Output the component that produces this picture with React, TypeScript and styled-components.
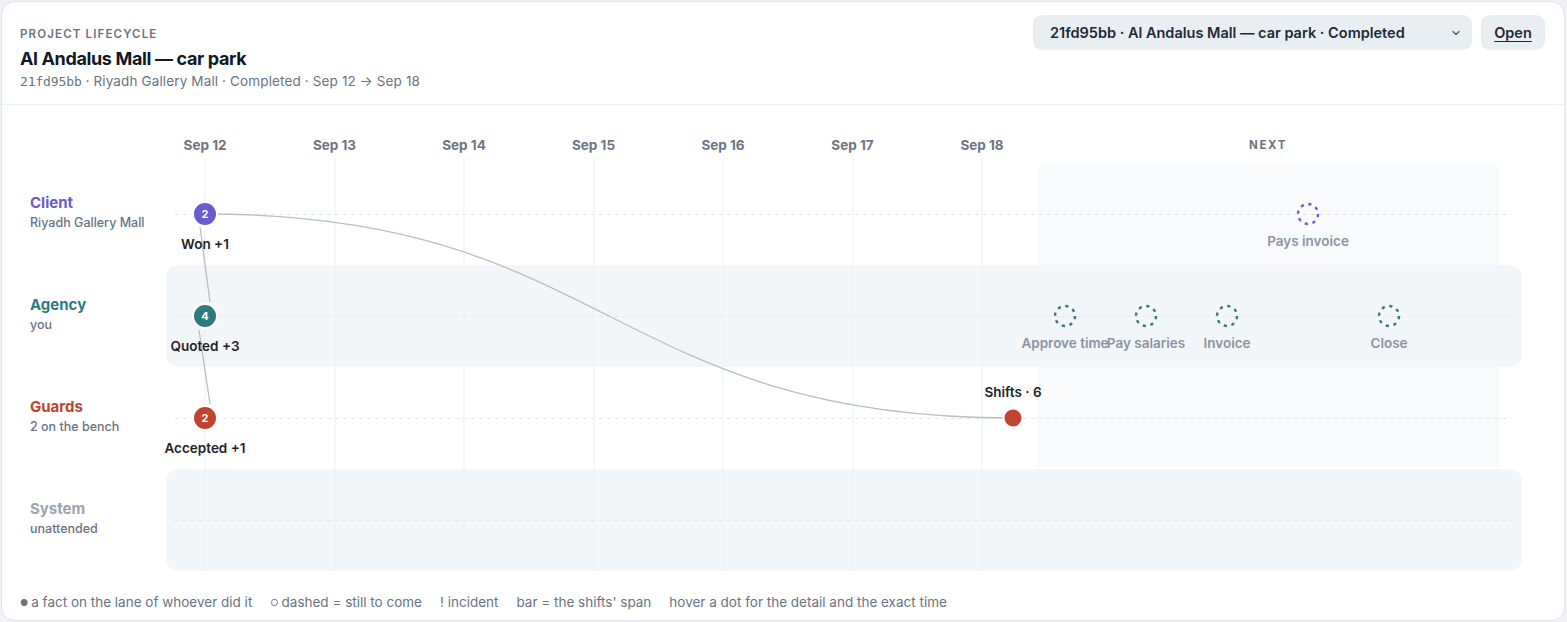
import styled, { createGlobalStyle } from 'styled-components';

const GlobalStyle = createGlobalStyle`
  html, body {
    margin: 0;
    padding: 0;
    background: #eef1f5;
  }
  body {
    font-family: Inter, 'Noto Sans', sans-serif;
    color: #111827;
    -webkit-font-smoothing: antialiased;
  }
`;

// chart scale (px inside the plot column)
const AXIS_H = 58;
const LANE_H = 102;
const DAY0 = 39;
const DAY_W = 129.5;
const NEXT_X = 871;
const NEXT_W = 462;

const dayX = (d: number) => DAY0 + DAY_W * d;
const laneY = (i: number) => AXIS_H + LANE_H * i + LANE_H / 2;
const slotX = (k: number) => NEXT_X + 28 + 81 * k;

const PURPLE = '#6b5bd0';
const TEAL = '#2f7a80';
const RED = '#c0442f';

const Page = styled.div`
	padding: 1px 2px 2px 1px;
`;

const Card = styled.div`
	background: #ffffff;
	border: 1px solid #e2e6eb;
	border-radius: 14px;
	overflow: hidden;
`;

const Header = styled.header`
	display: flex;
	justify-content: space-between;
	align-items: flex-start;
	height: 103px;
	box-sizing: border-box;
	padding: 13px 19px 0 18px;
	border-bottom: 1px solid #edf0f3;
`;

const TitleBlock = styled.div`
	display: flex;
	flex-direction: column;
	padding-top: 12px;
`;

const Eyebrow = styled.div`
	font-size: 11.5px;
	line-height: 14px;
	font-weight: 600;
	letter-spacing: 0.1em;
	text-transform: uppercase;
	color: #6b7280;
`;

const Title = styled.h1`
	margin: 7px 0 0;
	font-size: 18px;
	line-height: 22px;
	font-weight: 700;
	letter-spacing: -0.02em;
	color: #111827;
`;

const Meta = styled.div`
	margin-top: 3px;
	font-size: 13.5px;
	line-height: 16px;
	color: #6b7280;
	letter-spacing: 0.01em;
`;

const Mono = styled.span`
	font-family: 'DejaVu Sans Mono', 'Liberation Mono', monospace;
	font-size: 13px;
	letter-spacing: -0.01em;
`;

const Controls = styled.div`
	display: flex;
	gap: 9px;
`;

const SelectBox = styled.div`
	width: 439px;
	height: 35px;
	box-sizing: border-box;
	display: flex;
	align-items: center;
	justify-content: space-between;
	padding: 0 10px 0 17px;
	background: #e9eef3;
	border-radius: 9px;
	font-size: 14.5px;
	font-weight: 600;
	color: #1f2937;
`;

const OpenButton = styled.button`
	width: 64px;
	height: 35px;
	border: none;
	border-radius: 9px;
	background: #e9eef3;
	font-family: inherit;
	font-size: 14.5px;
	font-weight: 600;
	color: #1f2937;
	text-decoration: underline;
	text-underline-offset: 3px;
	cursor: pointer;
`;

const Timeline = styled.div`
	display: grid;
	grid-template-columns: 136px 1fr;
	grid-template-rows: ${AXIS_H}px repeat(4, ${LANE_H}px);
	padding: 0 42px 0 28px;
`;

const Layer = styled.div<{ $z: number }>`
	grid-column: 2;
	grid-row: 1 / -1;
	position: relative;
	z-index: ${p => p.$z};
	pointer-events: none;
`;

const NextZone = styled.div`
	position: absolute;
	left: ${NEXT_X}px;
	width: ${NEXT_W}px;
	top: ${AXIS_H}px;
	height: 304px;
	background: #f8fafc;
	border-radius: 12px 12px 0 0;
`;

const LaneLabel = styled.div<{ $row: number }>`
	grid-column: 1;
	grid-row: ${p => p.$row};
	display: flex;
	flex-direction: column;
	justify-content: center;
	padding-bottom: 4px;
	gap: 3px;
`;

const LaneName = styled.div<{ $color: string }>`
	font-size: 15px;
	line-height: 18px;
	font-weight: 700;
	color: ${p => p.$color};
`;

const LaneSub = styled.div`
	font-size: 12.5px;
	line-height: 16px;
	font-weight: 500;
	color: #6b7280;
`;

const LaneTrack = styled.div<{ $row: number; $shaded: boolean }>`
	grid-column: 2;
	grid-row: ${p => p.$row};
	position: relative;
	z-index: 1;
	background: ${p => (p.$shaded ? '#f3f6f9' : 'transparent')};
	border-radius: 12px;

	&::after {
		content: '';
		position: absolute;
		left: 9px;
		right: 10px;
		top: 50%;
		height: 1px;
		background-image: linear-gradient(to right, #e1e5ea 50%, transparent 50%);
		background-size: 8px 1px;
	}
`;

const GridLine = styled.div`
	position: absolute;
	top: 53px;
	bottom: 0;
	width: 1px;
	background: #eceff3;
	transform: translateX(-0.5px);
`;

const Tick = styled.div<{ $spaced?: boolean }>`
	position: absolute;
	top: 40px;
	transform: translate(-50%, -50%);
	font-size: ${p => (p.$spaced ? '11.5px' : '13.5px')};
	font-weight: 700;
	letter-spacing: ${p => (p.$spaced ? '0.14em' : '0')};
	color: #6b7583;
	white-space: nowrap;
`;

const Curves = styled.svg`
	position: absolute;
	left: 0;
	top: 0;
	overflow: visible;
`;

const Dot = styled.div<{ $color: string; $small?: boolean }>`
	position: absolute;
	width: ${p => (p.$small ? '17px' : '22px')};
	height: ${p => (p.$small ? '17px' : '22px')};
	border: 2px solid #ffffff;
	border-radius: 50%;
	background: ${p => p.$color};
	transform: translate(-50%, -50%);
	display: flex;
	align-items: center;
	justify-content: center;
	color: #ffffff;
	font-size: 11px;
	font-weight: 700;
`;

const DotLabel = styled.div<{ $future?: boolean }>`
	position: absolute;
	transform: translate(-50%, -50%);
	font-size: 13.5px;
	line-height: 16px;
	font-weight: 600;
	color: ${p => (p.$future ? '#8a94a2' : '#1f2328')};
	white-space: nowrap;
`;

const FutureSvg = styled.svg`
	position: absolute;
	transform: translate(-50%, -50%);
	overflow: visible;
`;

const Legend = styled.div`
	display: flex;
	gap: 18px;
	margin-top: 23px;
	padding: 0 18px 9px;
	font-size: 13.5px;
	line-height: 16px;
	color: #6b7280;
	white-space: nowrap;
`;

const LegendMark = styled.span`
	font-size: 9px;
	vertical-align: 1px;
	margin-right: 3px;
`;

function Chevron() {
	return (
		<svg width="12" height="12" viewBox="0 0 12 12" fill="none">
			<path d="M3 4.5L6 7.5L9 4.5" stroke="#4b5563" strokeWidth="1.2" strokeLinecap="round" strokeLinejoin="round" />
		</svg>
	);
}

function FutureMark({ x, y, color }: { x: number; y: number; color: string }) {
	return (
		<FutureSvg width="24" height="24" viewBox="0 0 24 24" style={{ left: x, top: y }}>
			<circle cx="12" cy="12" r="10" fill="none" stroke={color} strokeWidth="2.4" strokeDasharray="3.2 4.65" />
		</FutureSvg>
	);
}

const lanes = [
	{ name: 'Client', sub: 'Riyadh Gallery Mall', color: PURPLE },
	{ name: 'Agency', sub: 'you', color: TEAL },
	{ name: 'Guards', sub: '2 on the bench', color: RED },
	{ name: 'System', sub: 'unattended', color: '#9aa3ae' },
];

const days = ['Sep 12', 'Sep 13', 'Sep 14', 'Sep 15', 'Sep 16', 'Sep 17', 'Sep 18'];

const facts = [
	{ lane: 0, count: 2, label: 'Won +1', color: PURPLE },
	{ lane: 1, count: 4, label: 'Quoted +3', color: TEAL },
	{ lane: 2, count: 2, label: 'Accepted +1', color: RED },
];

const upcoming = [
	{ lane: 0, slot: 3, label: 'Pays invoice', color: PURPLE },
	{ lane: 1, slot: 0, label: 'Approve time', color: TEAL },
	{ lane: 1, slot: 1, label: 'Pay salaries', color: TEAL },
	{ lane: 1, slot: 2, label: 'Invoice', color: TEAL },
	{ lane: 1, slot: 4, label: 'Close', color: TEAL },
];

export default function App() {
	const shiftsX = 847;
	const x0 = dayX(0);
	const mid = (x0 + shiftsX) / 2;

	return (
		<>
			<GlobalStyle />
			<Page>
				<Card>
					<Header>
						<TitleBlock>
							<Eyebrow>Project lifecycle</Eyebrow>
							<Title>Al Andalus Mall — car park</Title>
							<Meta>
								<Mono>21fd95bb</Mono> · Riyadh Gallery Mall · Completed · Sep 12 → Sep 18
							</Meta>
						</TitleBlock>
						<Controls>
							<SelectBox>
								<span>21fd95bb · Al Andalus Mall — car park · Completed</span>
								<Chevron />
							</SelectBox>
							<OpenButton>Open</OpenButton>
						</Controls>
					</Header>

					<Timeline>
						<Layer $z={0}>
							<NextZone />
						</Layer>

						{lanes.map((lane, i) => (
							<LaneLabel key={'label' + i} $row={i + 2}>
								<LaneName $color={lane.color}>{lane.name}</LaneName>
								<LaneSub>{lane.sub}</LaneSub>
							</LaneLabel>
						))}
						{lanes.map((lane, i) => (
							<LaneTrack key={'track' + i} $row={i + 2} $shaded={i % 2 === 1} />
						))}

						<Layer $z={2}>
							{days.map((d, i) => (
								<Tick key={d} style={{ left: dayX(i) }}>{d}</Tick>
							))}
							<Tick $spaced style={{ left: NEXT_X + NEXT_W / 2 }}>NEXT</Tick>
							{days.map((d, i) => (
								<GridLine key={'grid' + d} style={{ left: dayX(i) }} />
							))}

							<Curves width="1356" height="466" viewBox="0 0 1356 466">
								<path
									d={`M ${x0} ${laneY(0)} C ${mid} ${laneY(0)}, ${mid} ${laneY(2)}, ${shiftsX} ${laneY(2)}`}
									fill="none"
									stroke="#b9bec6"
									strokeWidth="1.3"
								/>
								<path d="M 34 122 L 44 197" stroke="#b9bec6" strokeWidth="1.3" />
								<path d="M 33 225 L 44 299" stroke="#b9bec6" strokeWidth="1.3" />
							</Curves>

							{facts.map(f => (
								<div key={f.label}>
									<Dot $color={f.color} style={{ left: x0, top: laneY(f.lane) }}>{f.count}</Dot>
									<DotLabel style={{ left: x0, top: laneY(f.lane) + 30 }}>{f.label}</DotLabel>
								</div>
							))}

							<Dot $small $color={RED} style={{ left: shiftsX, top: laneY(2) }} />
							<DotLabel style={{ left: shiftsX, top: laneY(2) - 26 }}>Shifts · 6</DotLabel>

							{upcoming.map(u => (
								<div key={u.label}>
									<FutureMark x={slotX(u.slot)} y={laneY(u.lane)} color={u.color} />
									<DotLabel $future style={{ left: slotX(u.slot), top: laneY(u.lane) + 27 }}>{u.label}</DotLabel>
								</div>
							))}
						</Layer>
					</Timeline>

					<Legend>
						<span><LegendMark>●</LegendMark>a fact on the lane of whoever did it</span>
						<span><LegendMark>○</LegendMark>dashed = still to come</span>
						<span>! incident</span>
						<span>bar = the shifts' span</span>
						<span>hover a dot for the detail and the exact time</span>
					</Legend>
				</Card>
			</Page>
		</>
	);
}
